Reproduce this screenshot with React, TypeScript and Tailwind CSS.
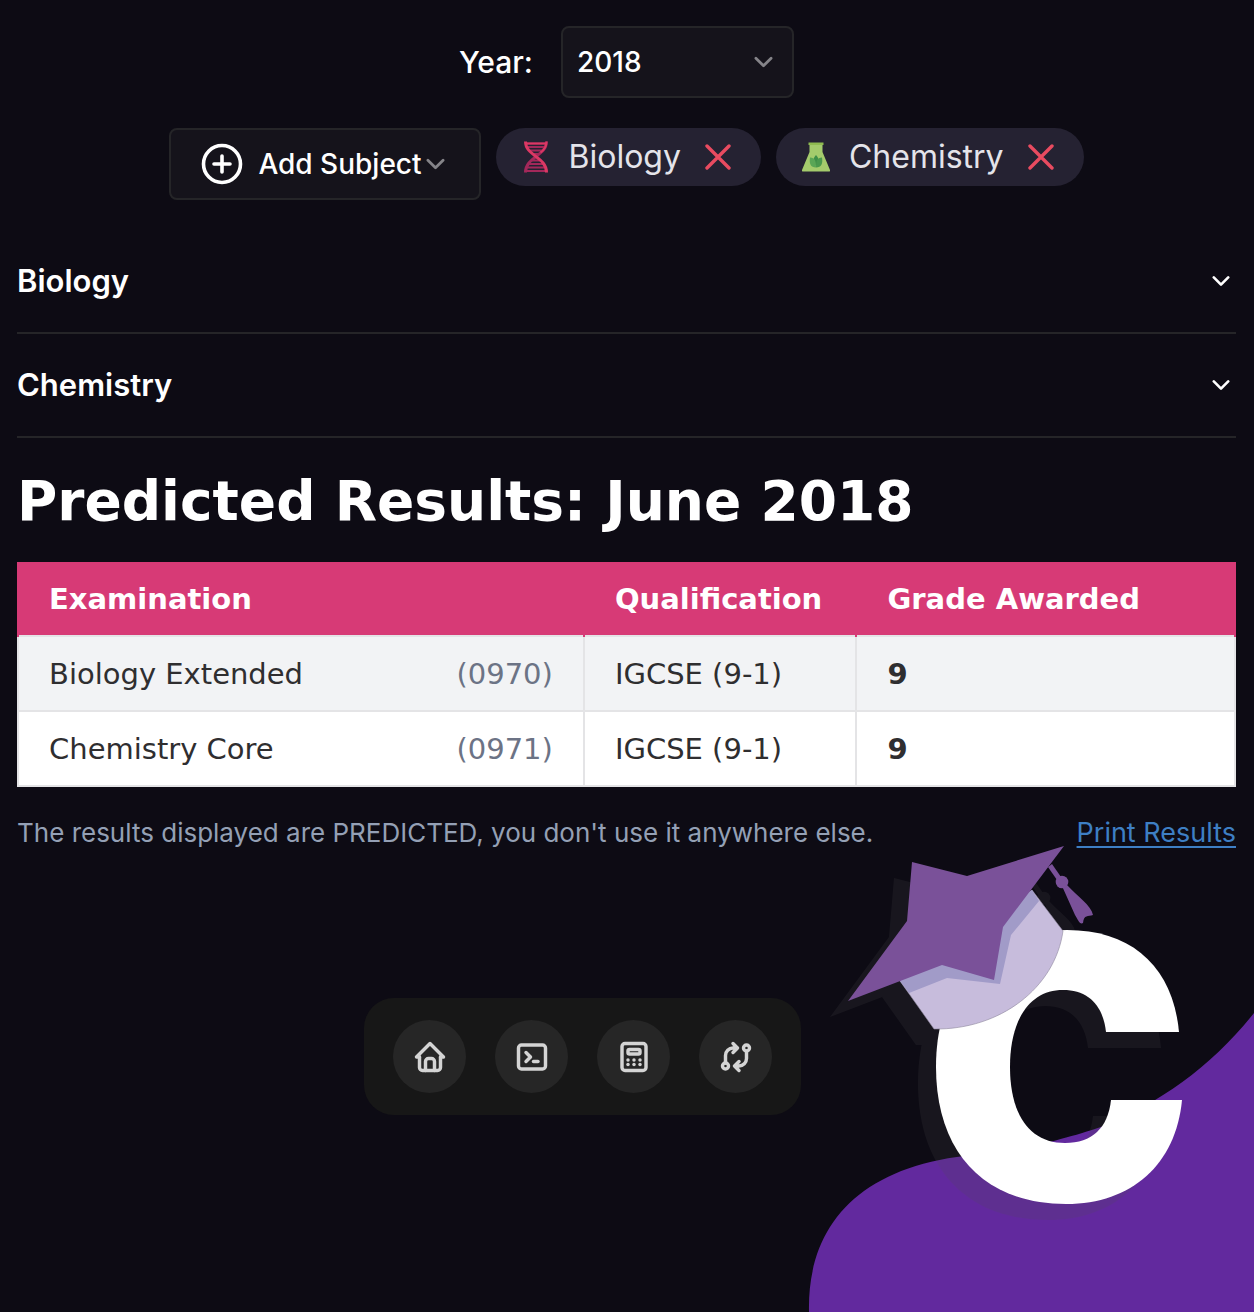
import type { ReactNode } from "react";
import { TbCalculator, TbExchange, TbHome, TbTerminal2 } from "react-icons/tb";

const results = [
  { name: "Biology Extended", code: "(0970)", qualification: "IGCSE (9-1)", grade: "9" },
  { name: "Chemistry Core", code: "(0971)", qualification: "IGCSE (9-1)", grade: "9" },
];

function Chevron({ className }: { className: string }) {
  return (
    <svg viewBox="0 0 20 12" fill="none" stroke="currentColor" strokeLinecap="round" strokeLinejoin="round" className={className} aria-hidden="true">
      <path d="M2 2l8 8 8-8" strokeWidth="2.9" />
    </svg>
  );
}

function DnaIcon() {
  return (
    <svg viewBox="0 0 28 34" fill="none" className="h-[34px] w-7" aria-hidden="true">
      <g stroke="#a3285a" strokeWidth="1.9">
        <path d="M4 3.5h20M5 7h18M7 10.5h14M10 14h8M10 20.5h8M7 24h14M5 27.500h18M4 31h20" />
      </g>
      <path d="M24.500 1.500C24.500 16 3.500 17 3.500 32.500" stroke="#a3285a" strokeWidth="3" />
      <path d="M3.500 1.500C3.500 16 24.500 17 24.500 32.500" stroke="#dc3864" strokeWidth="3" />
      <path d="M3 3.500h21M24.500 1.500c0 5-2.500 8.500-6 11" stroke="#dc3864" strokeWidth="2" />
    </svg>
  );
}

function FlaskIcon() {
  return (
    <svg viewBox="0 0 28 30" className="h-[30px] w-7" aria-hidden="true">
      <path d="M7.500 2h13v8L28 28q.3 1.500-1 1.500H1q-1.300 0-1-1.500L7.500 10z" fill="#a4cb6c" />
      <path d="M6.500.500h15V3h-15z" fill="#8fbb50" />
      <path d="M14 13c2.500 2.500 3.500 6 2.500 10h-5c-1-4 0-7.500 2.500-10z" fill="#3f8e48" />
      <path d="M8 15.500c5 .5 6 3 6 10-5.500 0-7-4-6-10z" fill="#5aa656" />
      <path d="M20 15.500c-5 .5-6 3-6 10 5.500 0 7-4 6-10z" fill="#4a984d" />
    </svg>
  );
}

function Chip({ label, icon }: { label: string; icon: ReactNode }) {
  return (
    <div className="flex h-[58px] items-center rounded-full bg-[#252232] pl-[26px] pr-[30px] text-[#e4e4ea]">
      {icon}
      <span className="ml-[19px] text-[32px] leading-10">{label}</span>
      <button type="button" aria-label={`Remove ${label}`} className="ml-6 text-[#e94b60]">
        <svg viewBox="0 0 26 26" fill="none" stroke="currentColor" strokeWidth="3.4" strokeLinecap="round" className="size-[26px]" aria-hidden="true">
          <path d="M2 2l22 22M24 2L2 24" />
        </svg>
      </button>
    </div>
  );
}

function SubjectRow({ label }: { label: string }) {
  return (
    <button type="button" aria-expanded="false" className="flex h-[104px] w-full items-center justify-between border-b-2 border-[#252528] pr-1.5 text-left text-[31px] font-semibold text-white">
      {label}
      <Chevron className="h-3 w-[18px]" />
    </button>
  );
}

function CapBoard() {
  return (
    <>
      <path d="M1064 846L967 876L912 862L907 921L848 1001L942 965L994 980L1003 927Z" />
      <path d="M1048 867l4-3 9 13-4 3z" />
      <path d="M1062 886L1067 885C1077 896 1091 905 1093 915C1088 917 1084 914 1083 923C1080 925 1078 920 1075 915Z" />
      <circle cx="1062" cy="882" r="6.300" />
    </>
  );
}

function Mascot() {
  return (
    <svg viewBox="800 830 454 482" className="pointer-events-none absolute bottom-0 right-0 h-[482px] w-[454px]" role="img" aria-label="Graduation cap mascot">
      <defs>
        <mask id="ring" maskUnits="userSpaceOnUse" x="800" y="830" width="454" height="482">
          <path d="M1067 930C1133 930 1173 968 1179 1032L1182 1100C1176 1164 1132 1204 1066 1204C984 1204 936 1152 936 1067C936 982 984 930 1067 930Z" fill="#fff" />
          <path d="M1063 990C1088 990 1103 1005 1106 1032L1111 1100C1108 1128 1092 1143 1065 1143C1030 1143 1010 1115 1010 1067C1010 1019 1030 990 1063 990Z" fill="#000" />
          <path d="M1062 1032H1220V1100H1062Z" fill="#000" />
        </mask>
      </defs>
      <path d="M809 1312C807 1225 860 1162 985 1154C1035 1148 1080 1134 1101 1127C1160 1103 1212 1066 1254 1013V1312Z" fill="#62299e" />
      <g transform="translate(-18 16)" fill="#505052" opacity="0.17">
        <rect x="800" y="830" width="454" height="482" mask="url(#ring)" />
        <path d="M900 981L934 1029C1000 1030 1055 988 1063 931L1032 890Z" />
        <CapBoard />
      </g>
      <rect x="800" y="830" width="454" height="482" fill="#fff" mask="url(#ring)" />
      <path d="M900 981L934 1029C1000 1030 1055 988 1063 931L1032 890Z" fill="#c7bcdc" stroke="#8f889e" strokeWidth="0.6" />
      <path d="M900 981L909 993L947 978L1000 984L1011 935L1039 901L1032 890Z" fill="#a19bc8" />
      <g fill="#7a5199">
        <CapBoard />
      </g>
    </svg>
  );
}

const dock = [
  { label: "Home", Icon: TbHome },
  { label: "Terminal", Icon: TbTerminal2 },
  { label: "Calculator", Icon: TbCalculator },
  { label: "Exchange", Icon: TbExchange },
];

export default function App() {
  return (
    <div className="relative min-h-screen overflow-hidden bg-[#0d0b14] font-['Inter',sans-serif] text-white">
      <Mascot />
      <main className="relative pl-[17px] pr-[18px] pt-[26px]">
        <div className="flex items-center justify-center gap-7">
          <label htmlFor="year" className="text-[30px] font-medium leading-10">Year:</label>
          <div className="relative">
            <select id="year" defaultValue="2018" className="block h-[72px] w-[233px] appearance-none rounded-lg border-2 border-[#252528] bg-[#15131b] px-3.5 text-[28px] font-medium">
              <option>2018</option>
              <option>2019</option>
            </select>
            <Chevron className="pointer-events-none absolute right-[21px] top-[30px] h-3 w-[19px] text-[#858489]" />
          </div>
        </div>

        <div className="mt-[30px] flex flex-wrap items-start justify-center gap-[15px]">
          <button type="button" className="flex h-[72px] items-center rounded-lg border-2 border-[#252528] bg-[#15131b] pl-[30px] pr-[34px] text-[28px] font-medium">
            <svg viewBox="0 0 42 42" fill="none" stroke="currentColor" strokeWidth="3.6" strokeLinecap="round" className="size-[42px]" aria-hidden="true">
              <circle cx="21" cy="21" r="18.500" />
              <path d="M21 13v16M13 21h16" />
            </svg>
            <span className="ml-[15px]">Add Subject</span>
            <Chevron className="ml-1 h-3 w-[19px] text-[#858489]" />
          </button>
          <Chip label="Biology" icon={<DnaIcon />} />
          <Chip label="Chemistry" icon={<FlaskIcon />} />
        </div>

        <div className="mt-[30px]">
          <SubjectRow label="Biology" />
          <SubjectRow label="Chemistry" />
        </div>

        <h1 className="mt-[27px] font-['DejaVu_Sans',sans-serif] text-[55px] font-bold leading-[72px]">Predicted Results: June 2018</h1>

        <table className="mt-[25px] w-full table-fixed border-collapse font-['DejaVu_Sans',sans-serif] text-[29px] leading-10 text-[#2f2e30]">
          <colgroup>
            <col className="w-[46.5%]" />
            <col className="w-[22.4%]" />
            <col />
          </colgroup>
          <thead>
            <tr className="h-[74px] bg-[#d73a76] text-left text-white">
              <th scope="col" className="border-x-2 border-[#d73a76] px-[30px]">Examination</th>
              <th scope="col" className="border-x-2 border-[#d73a76] px-[30px]">Qualification</th>
              <th scope="col" className="border-x-2 border-[#d73a76] px-[30px]">Grade Awarded</th>
            </tr>
          </thead>
          <tbody>
            {results.map((r) => (
              <tr key={r.code} className="h-[75px] odd:bg-[#f2f3f5] even:bg-white">
                <td className="border-2 border-[#e4e4e6] px-[30px]">
                  <div className="flex justify-between">
                    <span>{r.name}</span>
                    <span className="text-[#6c7385]">{r.code}</span>
                  </div>
                </td>
                <td className="border-2 border-[#e4e4e6] px-[30px]">{r.qualification}</td>
                <td className="border-2 border-[#e4e4e6] px-[30px] font-bold">{r.grade}</td>
              </tr>
            ))}
          </tbody>
        </table>

        <div className="mt-7 flex items-center justify-between leading-9">
          <p className="text-[26px] text-[#94a0b5]">The results displayed are PREDICTED, you don't use it anywhere else.</p>
          <a href="#print" className="text-[27px] text-[#3e7fc4] underline decoration-2 underline-offset-4">Print Results</a>
        </div>

        <div className="mt-[147px] flex justify-center pr-[88px]">
          <nav aria-label="Main" className="flex gap-[29px] rounded-[30px] bg-[#171717] px-[29px] py-[22px]">
            {dock.map(({ label, Icon }) => (
              <a key={label} href={`#${label.toLowerCase()}`} aria-label={label} className="flex size-[73px] items-center justify-center rounded-full bg-[#262626] text-[#d4d4d4]">
                <Icon className="size-9 stroke-[2.3]" />
              </a>
            ))}
          </nav>
        </div>
      </main>
    </div>
  );
}
